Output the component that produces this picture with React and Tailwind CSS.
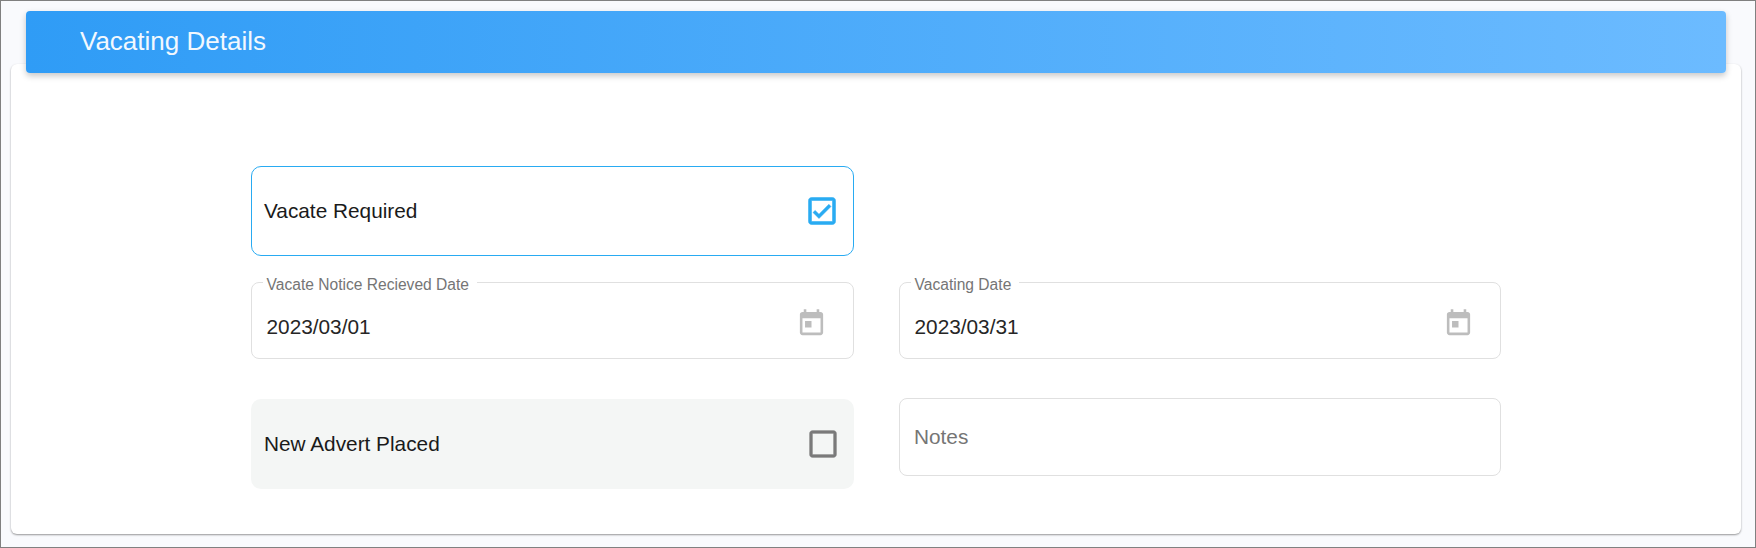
import React from "react";

const CheckedIcon = () => (
  <svg viewBox="0 0 24 24" className="h-9 w-9 fill-[#29abf2] stroke-[#29abf2] stroke-[0.35]">
    <path d="M19 3H5c-1.1 0-2 .9-2 2v14c0 1.1.9 2 2 2h14c1.1 0 2-.9 2-2V5c0-1.1-.9-2-2-2zm0 16H5V5h14v14zM17.99 9l-1.41-1.42-6.59 6.59-2.58-2.57-1.42 1.41 4 3.99z" />
  </svg>
);

const UncheckedIcon = () => (
  <svg viewBox="0 0 24 24" className="h-9 w-9 fill-[#7a7a7a] stroke-[#7a7a7a] stroke-[0.2]">
    <path d="M19 5v14H5V5h14m0-2H5c-1.1 0-2 .9-2 2v14c0 1.1.9 2 2 2h14c1.1 0 2-.9 2-2V5c0-1.1-.9-2-2-2z" />
  </svg>
);

const TodayIcon = () => (
  <svg viewBox="0 0 24 24" className="mt-[6px] h-[31px] w-[31px] fill-[#bdbdbd]">
    <path d="M19 3h-1V1h-2v2H8V1H6v2H5c-1.11 0-1.99.9-1.99 2L3 19c0 1.1.89 2 2 2h14c1.1 0 2-.9 2-2V5c0-1.1-.9-2-2-2zm0 16H5V8h14v11zM7 10h5v5H7z" />
  </svg>
);

const DateField = ({ label, value }) => (
  <div className="relative flex h-[77px] items-center justify-between rounded-lg border border-[#e0e0e0] pl-[14.5px] pr-[26px]">
    <span className="absolute -top-[6px] left-[10.5px] bg-white px-[4px] pr-[8px] text-[15.6px] leading-[16px] text-[#757575]">
      {label}
    </span>
    <span className="mt-[12px] text-[20.8px] text-[#262626]">{value}</span>
    <TodayIcon />
  </div>
);

const App = () => {
  return (
    <div className="h-[548px] border border-[#808080] bg-[#f9fafd] pl-[10px] pr-[14px] pt-[10px] font-['Liberation_Sans',Arial,sans-serif]">
      {/* header */}
      <div className="relative z-10 mx-[15px] flex h-[62px] items-center rounded bg-linear-to-r/srgb from-[#2f9cf6] to-[#6cbbff] pb-[2px] pl-[54px] text-[26px] text-[#f2f8fe] shadow-[0_3px_6px_rgba(0,0,0,0.22)]">
        Vacating Details
      </div>

      {/* card */}
      <div className="-mt-[9px] h-[470px] rounded-md bg-white pl-[240px] pt-[102px] shadow-[0_1px_2px_rgba(0,0,0,0.4)]">
        <div className="grid w-[1250px] grid-cols-[603px_602px] items-start gap-x-[45px]">
          <div className="flex h-[90px] items-center justify-between rounded-[10px] border border-[#29abf2] pl-[12px] pr-[13px] text-[20.8px] text-[#1a1a1a]">
            Vacate Required
            <CheckedIcon />
          </div>
          <div />

          <div className="col-span-2 mt-[26px] grid grid-cols-[603px_602px] gap-x-[45px]">
            <DateField label="Vacate Notice Recieved Date" value="2023/03/01" />
            <DateField label="Vacating Date" value="2023/03/31" />
          </div>

          <div className="mt-[40px] flex h-[90px] items-center justify-between rounded-[10px] bg-[#f4f6f5] pl-[13px] pr-[13px] text-[20.8px] text-[#1a1a1a]">
            New Advert Placed
            <UncheckedIcon />
          </div>
          <div className="mt-[39px] flex h-[78px] items-center rounded-lg border border-[#e0e0e0] pl-[14px] text-[20.8px] text-[#757575]">
            Notes
          </div>
        </div>
      </div>
    </div>
  );
};

export default App;
